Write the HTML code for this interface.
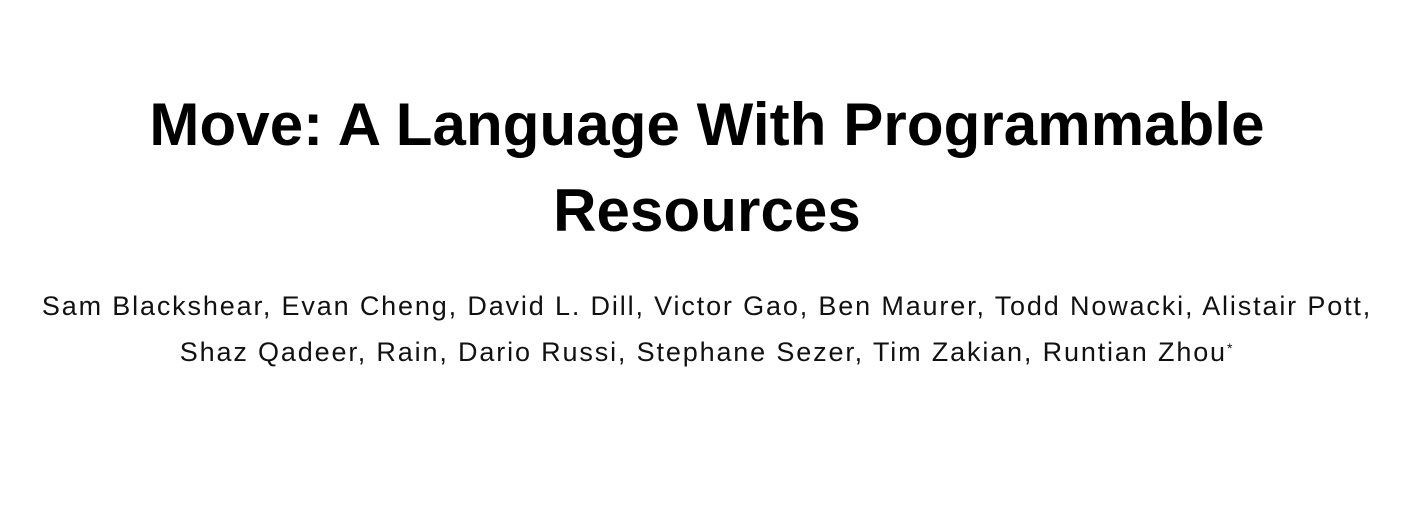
<!DOCTYPE html>
<html><head><meta charset="utf-8"><style>
html,body{margin:0;padding:0;background:#fff;width:1414px;height:514px;overflow:hidden}
body{font-family:"Liberation Sans",sans-serif;color:#000;text-align:center}
h1{margin:0;position:absolute;top:82px;left:0;width:1414px;font-size:60px;line-height:86px;font-weight:bold;letter-spacing:0.1px}
p{margin:0;position:absolute;top:285px;left:0;width:1414px;font-size:27px;line-height:42px;color:#111;letter-spacing:1.85px}
</style></head><body>
<h1>Move: A Language With Programmable<br>Resources</h1>
<p>Sam Blackshear, Evan Cheng, David L. Dill, Victor Gao, Ben Maurer, Todd Nowacki, Alistair Pott,<br>Shaz Qadeer, Rain, Dario Russi, Stephane Sezer, Tim Zakian, Runtian Zhou<sup style="font-size:14px;vertical-align:8px">*</sup></p>
</body></html>
